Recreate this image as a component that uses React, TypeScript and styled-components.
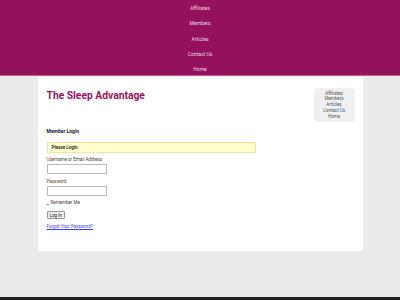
import React from "react";
import styled, {createGlobalStyle} from "styled-components";

const GlobalStyle = createGlobalStyle`
  html, body {
    margin: 0;
    padding: 0;
    background: #ebebeb;
  }
  body {
    font-family: Roboto, "Liberation Sans", sans-serif;
  }
`

const navItems = ["Affiliates", "Members", "Articles", "Contact Us", "Home"]

export default function App() {
    return (
        <Page>
            <GlobalStyle/>
            <TopNav>
                {navItems.map(item => <NavItem key={item} href="#">{item}</NavItem>)}
            </TopNav>
            <Main>
                <Content>
                    <Title>The Sleep Advantage</Title>
                    <SectionTitle>Member Login</SectionTitle>
                    <Notice>Please Login</Notice>
                    <Field $gap={4}>
                        <Label>Username or Email Address</Label>
                        <Input type="text"/>
                    </Field>
                    <Field $gap={5}>
                        <Label>Password</Label>
                        <Input type="password"/>
                    </Field>
                    <Remember>
                        <Check/>
                        Remember Me
                    </Remember>
                    <LoginButton>Log In</LoginButton>
                    <Forgot href="#">Forgot Your Password?</Forgot>
                </Content>
                <Sidebar>
                    <SideMenu>
                        {navItems.map(item => <SideItem key={item}>{item}</SideItem>)}
                    </SideMenu>
                </Sidebar>
            </Main>
            <Footer/>
        </Page>
    )
}

const Page = styled.div`
  width: 400px;
  height: 300px;
  display: flex;
  flex-direction: column;
  overflow: hidden;
`
const TopNav = styled.nav`
  background: #93125b;
  border-bottom: 1px solid #b8609a;
  height: 76px;
  display: flex;
  flex-direction: column;
  align-items: center;
  padding-top: 5px;
  box-sizing: border-box;
  gap: 9.3px;
`
const NavItem = styled.a`
  color: #f0d6e4;
  font-size: 5px;
  line-height: 6px;
  text-decoration: none;
`
const Main = styled.div`
  width: 325px;
  margin: 1px auto 0;
  background: #fff;
  height: 174px;
  display: flex;
  box-sizing: border-box;
  padding: 0 8px 0 9px;
`
const Content = styled.div`
  flex: 1;
  display: flex;
  flex-direction: column;
  align-items: flex-start;
  padding-top: 12px;
`
const Title = styled.h1`
  margin: 0;
  font-size: 10.3px;
  line-height: 13px;
  font-weight: 700;
  color: #96145e;
`
const SectionTitle = styled.h3`
  margin: 26px 0 0;
  font-size: 5px;
  line-height: 7px;
  font-weight: 700;
  color: #222;
`
const Notice = styled.div`
  margin-top: 7px;
  width: 209px;
  height: 11px;
  box-sizing: border-box;
  background: #ffffd0;
  border: 1px solid #ede6a4;
  font-size: 4.5px;
  font-weight: 700;
  color: #333;
  display: flex;
  align-items: center;
  padding-left: 4px;
`
const Field = styled.div<{ $gap: number }>`
  display: flex;
  flex-direction: column;
  margin-top: ${p => p.$gap}px;
`
const Label = styled.span`
  font-size: 4.5px;
  line-height: 6px;
  color: #444;
`
const Input = styled.input`
  width: 60px;
  height: 10px;
  box-sizing: border-box;
  border: 1px solid #bbb;
  margin: 1px 0 0;
  padding: 0;
`
const Remember = styled.label`
  margin-top: 4px;
  font-size: 4.5px;
  line-height: 6px;
  color: #444;
  display: flex;
  align-items: center;
  gap: 2px;
`
const Check = styled.span`
  width: 2px;
  height: 1px;
  background: #888;
  margin-top: 2px;
`
const LoginButton = styled.button`
  margin-top: 5px;
  height: 8px;
  padding: 0 2px;
  font-size: 4.5px;
  font-family: inherit;
  background: #eee;
  border: 1px solid #999;
  border-radius: 1px;
  color: #222;
  line-height: 5px;
`
const Forgot = styled.a`
  margin-top: 5px;
  font-size: 4.5px;
  line-height: 6px;
  color: #3b3bff;
`
const Sidebar = styled.aside`
  width: 41px;
  padding-top: 11px;
`
const SideMenu = styled.div`
  background: #f0f0f0;
  border-radius: 4px;
  height: 34px;
  display: flex;
  flex-direction: column;
  align-items: center;
  justify-content: center;
`
const SideItem = styled.span`
  font-size: 4.5px;
  line-height: 5.7px;
  color: #555;
`
const Footer = styled.div`
  margin-top: auto;
  height: 3px;
  background: #222;
`
